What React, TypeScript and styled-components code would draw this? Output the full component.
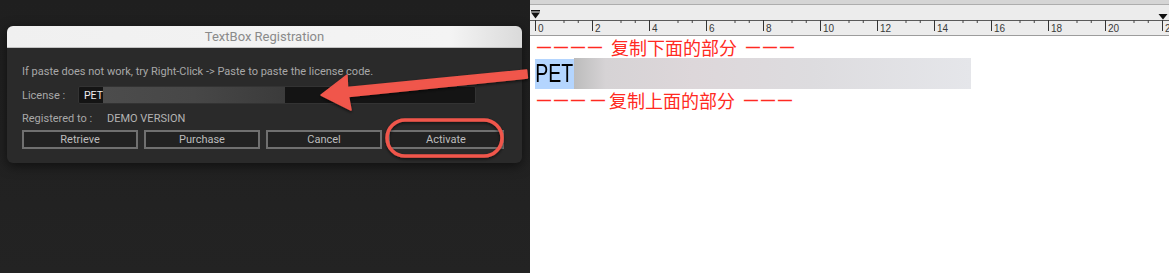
import React from 'react';
import styled, { createGlobalStyle } from 'styled-components';

const GlobalStyle = createGlobalStyle`
  html, body {
    margin: 0;
    padding: 0;
    background: #fff;
  }
  body {
    width: 1169px;
    height: 273px;
    overflow: hidden;
  }
`;

const Screen = styled.div`
  position: relative;
  display: flex;
  width: 1169px;
  height: 273px;
  overflow: hidden;
`;

// left side: the dark app window with the dialog
const DarkPane = styled.div`
  flex: none;
  width: 530px;
  box-sizing: border-box;
  padding: 26px 0 0 7px;
  background: linear-gradient(180deg, #1f1f1f 0%, #232323 100%);
`;

const Dialog = styled.div`
  display: flex;
  flex-direction: column;
  width: 515px;
  height: 137px;
  background: #2a2a2a;
  border-radius: 6px;
  box-shadow: 0 3px 12px rgba(0, 0, 0, 0.55);
  overflow: hidden;
  font-family: Roboto, 'Liberation Sans', sans-serif;
`;

const TitleBar = styled.div`
  display: flex;
  align-items: center;
  justify-content: center;
  height: 21px;
  background: linear-gradient(90deg, #f0f0f0 0%, #f4f4f4 86%, #dadada 100%);
  border-bottom: 1px solid #c2c2c2;
  color: #8a8a8a;
  font-size: 13px;
`;

const Body = styled.div`
  display: flex;
  flex-direction: column;
  padding: 17px 15px 0 15px;
  font-size: 11px;
  color: #a8a8a8;
`;

const Hint = styled.div`
  height: 14px;
  line-height: 14px;
`;

const FieldRow = styled.div<{ $gap: number }>`
  display: flex;
  align-items: center;
  margin-top: ${p => p.$gap}px;
`;

const Label = styled.span<{ $width: number }>`
  flex: none;
  width: ${p => p.$width}px;
`;

const LicenseInput = styled.div`
  display: flex;
  align-items: center;
  width: 398px;
  height: 18px;
  box-sizing: border-box;
  padding-left: 5px;
  background: #141414;
  border: 1px solid #333;
  border-radius: 2px;
  color: #ececec;
  font-size: 10.5px;
`;

const Blurred = styled.span<{ $width: number; $height: number; $bg: string }>`
  display: inline-block;
  width: ${p => p.$width}px;
  height: ${p => p.$height}px;
  background: ${p => p.$bg};
`;

const Value = styled.span`
  color: #b4b4b4;
`;

const ButtonRow = styled.div`
  display: flex;
  gap: 6px;
  margin-top: 5px;
`;

const Button = styled.div`
  display: flex;
  align-items: center;
  justify-content: center;
  width: 116px;
  height: 19px;
  box-sizing: border-box;
  background: #222;
  border: 2px solid #707070;
  color: #bdbdbd;
  font-size: 11px;
`;

// right side: the text editor with a ruler
const EditorPane = styled.div`
  flex: 1;
  display: flex;
  flex-direction: column;
  background: #fff;
`;

const TopStrip = styled.div`
  height: 4px;
  background: #d5d5d5;
  border-bottom: 1px solid #adadad;
`;

const RulerBar = styled.div`
  height: 30px;
  background: #ececec;
  border-bottom: 1px solid #9c9c9c;
`;

const Doc = styled.div`
  display: flex;
  flex-direction: column;
  padding: 1px 0 0 5px;
`;

const RedLine = styled.div`
  display: flex;
  align-items: center;
  height: 20px;
  color: #ff2a22;
  font-family: 'Noto Sans CJK SC', sans-serif;
  font-size: 18px;
  line-height: 20px;
`;

const Dashes = styled.span<{ $before: number; $after: number }>`
  font-family: 'Liberation Sans', sans-serif;
  font-size: 14px;
  font-weight: bold;
  letter-spacing: 3px;
  margin-left: ${p => p.$before}px;
  margin-right: ${p => p.$after}px;
`;

const PasteRow = styled.div`
  display: flex;
  align-items: center;
  height: 33px;
`;

const Selected = styled.span`
  display: flex;
  align-items: center;
  justify-content: center;
  width: 39px;
  height: 30px;
  background: #b4d5fe;
  color: #000;
  font-family: 'Liberation Sans Narrow', 'Liberation Sans', sans-serif;
  font-size: 25px;
`;

const Condensed = styled.span`
  display: inline-block;
  transform: scaleX(0.78);
`;

const Overlay = styled.svg`
  position: absolute;
  left: 0;
  top: 0;
  pointer-events: none;
`;

const UNIT = 28.5;
const ORIGIN = 5;

const Ruler = () => {
  const majors = Array.from({ length: 12 }, (_, i) => i);
  return (
    <svg width="639" height="30">
      <line x1="0" y1="15.5" x2="639" y2="15.5" stroke="#5a5a5a" strokeWidth="1" />
      {majors.map(i => {
        const x = Math.round(ORIGIN + i * 2 * UNIT) + 0.5;
        return (
          <g key={i}>
            <line x1={x} y1="15" x2={x} y2="26" stroke="#333" strokeWidth="1" />
            <line x1={x + UNIT} y1="15" x2={x + UNIT} y2="18" stroke="#444" strokeWidth="1" />
            <line x1={x + UNIT * 1.5} y1="15" x2={x + UNIT * 1.5} y2="18" stroke="#444" strokeWidth="1" />
            <text
              x={x + 2.5}
              y="27"
              fontSize="10"
              fontFamily="'Liberation Sans', sans-serif"
              fill="#3a3a3a"
            >
              {i * 2}
            </text>
          </g>
        );
      })}
      {/* first line indent marker */}
      <rect x="1" y="5" width="9" height="1.5" fill="#111" />
      <polygon points="1,7.5 10,7.5 5.5,13.5" fill="#111" />
      {/* right margin marker */}
      <polygon points="628.5,9 637.5,9 633,14.5" fill="#111" />
    </svg>
  );
};

const App = () => {
  return (
    <Screen>
      <GlobalStyle />
      <DarkPane>
        <Dialog>
          <TitleBar>TextBox Registration</TitleBar>
          <Body>
            <Hint>If paste does not work, try Right-Click -&gt; Paste to paste the license code.</Hint>
            <FieldRow $gap={7}>
              <Label $width={56}>License :</Label>
              <LicenseInput>
                PET
                <Blurred
                  $width={182}
                  $height={16}
                  $bg="linear-gradient(90deg, #4c4c4c 0%, #474747 50%, #3b3b3b 100%)"
                />
              </LicenseInput>
            </FieldRow>
            <FieldRow $gap={8}>
              <Label $width={85}>Registered to :</Label>
              <Value>DEMO VERSION</Value>
            </FieldRow>
            <ButtonRow>
              <Button>Retrieve</Button>
              <Button>Purchase</Button>
              <Button>Cancel</Button>
              <Button>Activate</Button>
            </ButtonRow>
          </Body>
        </Dialog>
      </DarkPane>
      <EditorPane>
        <TopStrip />
        <RulerBar>
          <Ruler />
        </RulerBar>
        <Doc>
          <RedLine>
            <Dashes $before={2} $after={6}>————</Dashes>
            复制下面的部分
            <Dashes $before={9} $after={0}>———</Dashes>
          </RedLine>
          <PasteRow>
            <Selected>
              <Condensed>PET</Condensed>
            </Selected>
            <Blurred
              $width={397}
              $height={31}
              $bg="linear-gradient(90deg, #bcbcbc 0%, #d6d3d5 8%, #ddd7da 30%, #dddcdf 60%, #e5e6ea 100%)"
            />
          </PasteRow>
          <RedLine>
            <Dashes $before={2} $after={0}>———</Dashes>
            <Dashes $before={3} $after={1}>—</Dashes>
            复制上面的部分
            <Dashes $before={9} $after={0}>———</Dashes>
          </RedLine>
        </Doc>
      </EditorPane>
      <Overlay width="1169" height="273" viewBox="0 0 1169 273">
        <defs>
          <filter id="markShadow" x="-10%" y="-30%" width="120%" height="160%">
            <feDropShadow dx="0" dy="1.5" stdDeviation="1.5" floodColor="#000" floodOpacity="0.6" />
          </filter>
        </defs>
        <rect
          x="387"
          y="120"
          width="115"
          height="36"
          rx="18"
          fill="none"
          stroke="#f0564b"
          strokeWidth="3.5"
          filter="url(#markShadow)"
        />
        <polygon
          points="321,95 347,75 347.5,87.5 526.6,70 527.4,78 348.5,96.5 351,110"
          fill="#f0564b"
          stroke="#f0564b"
          strokeWidth="1.5"
          strokeLinejoin="round"
          filter="url(#markShadow)"
        />
      </Overlay>
    </Screen>
  );
};

export default App;
